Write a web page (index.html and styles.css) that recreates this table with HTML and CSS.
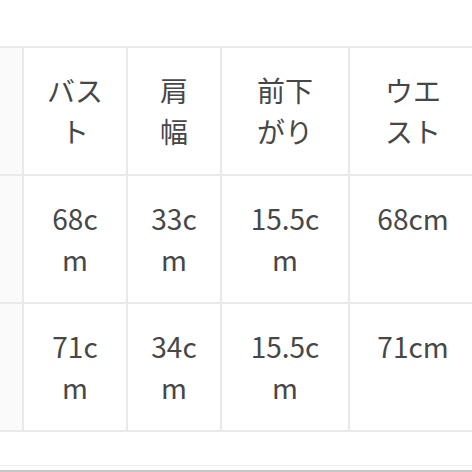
FILE: index.html
```html
<!DOCTYPE html>
<html lang="ja">
<head>
<meta charset="utf-8">
<title>サイズ表</title>
<link rel="stylesheet" href="styles.css">
</head>
<body>
<div class="sheet">
  <div class="size-table">
    <div class="cell edge"></div>
    <div class="cell">バスト</div>
    <div class="cell">肩幅</div>
    <div class="cell">前下がり</div>
    <div class="cell">ウエスト</div>

    <div class="cell edge"></div>
    <div class="cell">68cm</div>
    <div class="cell">33cm</div>
    <div class="cell">15.5cm</div>
    <div class="cell">68cm</div>

    <div class="cell edge"></div>
    <div class="cell">71cm</div>
    <div class="cell">34cm</div>
    <div class="cell">15.5cm</div>
    <div class="cell">71cm</div>
  </div>
  <div class="bottom-edge"></div>
</div>
</body>
</html>
```

FILE: styles.css
```css
html, body {
  margin: 0;
  padding: 0;
  background: #ffffff;
}

body {
  width: 472px;
  height: 472px;
  overflow: hidden;
  font-family: "Noto Sans CJK JP", "Noto Sans", sans-serif;
}

.sheet {
  padding-top: 46px;
  width: 480px;
}

.size-table {
  display: grid;
  grid-template-columns: 22px 102px 92px 126px 126px;
  grid-auto-rows: 126px;
  gap: 2px;
  padding: 2px 0;
  background: #e9e9e9;
}

.cell {
  background: #ffffff;
  padding: 22px 22px 0;
  text-align: center;
  font-size: 28px;
  line-height: 41px;
  color: #474747;
  overflow-wrap: anywhere;
  word-break: break-all;
}

.cell.edge {
  padding: 0;
  background: #fafafa;
}

.bottom-edge {
  margin-top: 33px;
  height: 4px;
  border-top: 1px solid #eeeeee;
  border-bottom: 2px solid #c6c6c6;
}
```
